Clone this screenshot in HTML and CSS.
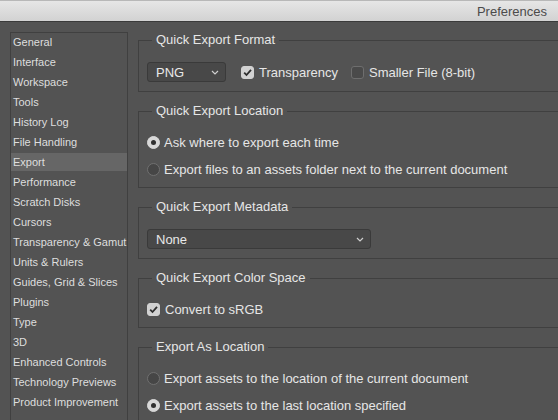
FILE: index.html
```html
<!DOCTYPE html>
<html lang="en">
<head>
  <meta charset="UTF-8">
  <meta name="viewport" content="width=device-width, initial-scale=1">
  <title>Preferences</title>
  <link rel="stylesheet" href="styles.css">
</head>
<body>

<!-- Barra de título -->
<div class="titlebar">
  <span class="title">Preferences</span>
</div>

<div class="window">

  <!-- Lista de seções -->
  <ul class="nav">
    <li>General</li>
    <li>Interface</li>
    <li>Workspace</li>
    <li>Tools</li>
    <li>History Log</li>
    <li>File Handling</li>
    <li class="active">Export</li>
    <li>Performance</li>
    <li>Scratch Disks</li>
    <li>Cursors</li>
    <li>Transparency &amp; Gamut</li>
    <li>Units &amp; Rulers</li>
    <li>Guides, Grid &amp; Slices</li>
    <li>Plugins</li>
    <li>Type</li>
    <li>3D</li>
    <li>Enhanced Controls</li>
    <li>Technology Previews</li>
    <li>Product Improvement</li>
  </ul>

  <!-- Grupos de opções -->
  <div class="panels">
    <fieldset class="group">
      <legend>Quick Export Format</legend>
      <div class="row">
        <div class="select select-format">
          <span>PNG</span>
          <svg class="chevron" width="8" height="5" viewBox="0 0 8 5"><polyline points="1,1 4,4 7,1" /></svg>
        </div>
        <label class="check checked">
          <span class="box"><svg width="13" height="13" viewBox="0 0 13 13"><polyline points="3.2,6.6 5.5,9 10,3.8" /></svg></span>
          Transparency
        </label>
        <label class="check">
          <span class="box"></span>
          Smaller File (8-bit)
        </label>
      </div>
    </fieldset>

    <fieldset class="group">
      <legend>Quick Export Location</legend>
      <label class="radio checked"><span class="dot"></span>Ask where to export each time</label>
      <label class="radio"><span class="dot"></span>Export files to an assets folder next to the current document</label>
    </fieldset>

    <fieldset class="group">
      <legend>Quick Export Metadata</legend>
      <div class="row">
        <div class="select select-meta">
          <span>None</span>
          <svg class="chevron" width="8" height="5" viewBox="0 0 8 5"><polyline points="1,1 4,4 7,1" /></svg>
        </div>
      </div>
    </fieldset>

    <fieldset class="group">
      <legend>Quick Export Color Space</legend>
      <label class="check checked">
        <span class="box"><svg width="13" height="13" viewBox="0 0 13 13"><polyline points="3.2,6.6 5.5,9 10,3.8" /></svg></span>
        Convert to sRGB
      </label>
    </fieldset>

    <fieldset class="group">
      <legend>Export As Location</legend>
      <label class="radio"><span class="dot"></span>Export assets to the location of the current document</label>
      <label class="radio checked"><span class="dot"></span>Export assets to the last location specified</label>
    </fieldset>
  </div>

</div>

</body>
</html>
```

FILE: styles.css
```css
body {
  margin: 0;
  background: #535353;
  font-family: "Liberation Sans", Arial, sans-serif;
  color: #e4e4e4;
  height: 420px;
  overflow: hidden;
}
.titlebar {
  height: 22px;
  background: linear-gradient(#e6e6e6, #d2d2d2);
  border-top: 1px solid #b8b8b8;
  border-bottom: 1px solid #3a3a3a;
  box-sizing: border-box;
  display: flex;
  align-items: center;
  justify-content: flex-end;
  padding-right: 11px;
}
.title {
  font-size: 13px;
  color: #4b4b4b;
}
.window {
  display: flex;
  align-items: flex-start;
  padding: 10px 0 0 10px;
}
.nav {
  list-style: none;
  margin: 0;
  padding: 0 0 20px 0;
  width: 116px;
  border: 1px solid #404040;
  flex-shrink: 0;
}
.nav li {
  height: 18px;
  line-height: 18px;
  margin-bottom: 2px;
  padding-left: 2px;
  font-size: 11px;
  color: #dedede;
  white-space: nowrap;
}
.nav li.active {
  background: #666666;
}
.panels {
  flex: 1;
  margin-left: 10px;
  margin-right: -20px;
}
.group {
  margin: 0 0 11px 0;
  padding: 14px 8px 9px 8px;
  border: 1px solid #404040;
  min-width: 0;
}
.group legend {
  font-size: 13px;
  line-height: 16px;
  padding: 0 4px;
  margin-left: 5px;
  color: #e6e6e6;
}
.row {
  display: flex;
  align-items: center;
  height: 20px;
}
.select {
  height: 20px;
  box-sizing: border-box;
  background: #484848;
  border: 1px solid #3a3a3a;
  border-radius: 3px;
  display: flex;
  align-items: center;
  justify-content: space-between;
  padding: 0 6px 0 8px;
  font-size: 13px;
  color: #e8e8e8;
}
.select-format {
  width: 79px;
  margin-right: 15px;
}
.select-meta {
  width: 224px;
}
.chevron polyline {
  fill: none;
  stroke: #cfcfcf;
  stroke-width: 1.2;
}
.check, .radio {
  display: flex;
  align-items: center;
  height: 18px;
  font-size: 13px;
  color: #e6e6e6;
  white-space: nowrap;
}
.radio + .radio {
  margin-top: 9px;
}
.check {
  margin-right: 13px;
}
.box {
  width: 13px;
  height: 13px;
  box-sizing: border-box;
  border-radius: 3px;
  border: 1px solid #6e6e6e;
  background: #4a4a4a;
  margin-right: 5px;
  display: flex;
}
.check.checked .box {
  background: #d2d2d2;
  border-color: #d2d2d2;
}
.box svg {
  margin: -1px;
}
.box polyline {
  fill: none;
  stroke: #2e2e2e;
  stroke-width: 1.8;
}
.dot {
  width: 13px;
  height: 13px;
  box-sizing: border-box;
  border-radius: 50%;
  border: 1px solid #707070;
  background: #464646;
  margin-right: 4px;
  display: flex;
  align-items: center;
  justify-content: center;
}
.radio.checked .dot {
  background: #d8d8d8;
  border-color: #d8d8d8;
}
.radio.checked .dot::after {
  content: "";
  width: 5px;
  height: 5px;
  border-radius: 50%;
  background: #303030;
}
```
